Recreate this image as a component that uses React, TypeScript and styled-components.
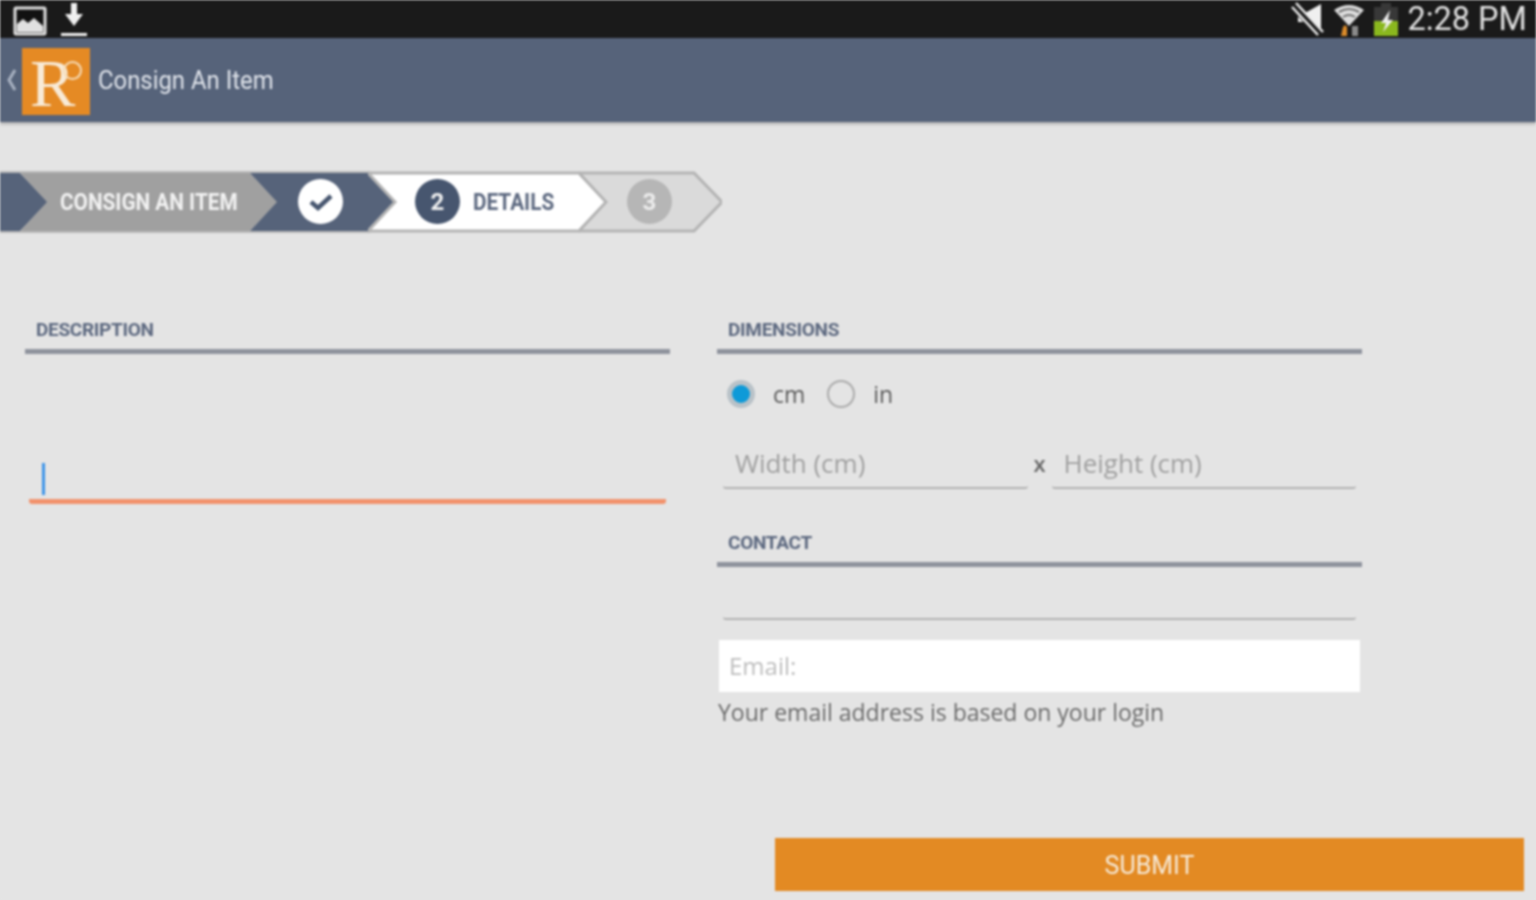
import React from 'react'
import styled, { createGlobalStyle } from 'styled-components'

const GlobalStyle = createGlobalStyle`
  html, body {
    margin: 0;
    padding: 0;
    background: #e4e4e4;
    overflow: hidden;
  }
`

export default function App() {
  return (
    <Screen>
      <GlobalStyle />
      <StatusBar>
        <StatusGroup>
          <PictureIcon />
          <DownloadIcon />
        </StatusGroup>
        <StatusGroup>
          <MuteIcon />
          <WifiIcon />
          <BatteryIcon />
          <Clock>2:28 PM</Clock>
        </StatusGroup>
      </StatusBar>

      <AppBar>
        <BackIcon />
        <Logo>
          R<LogoRing />
        </Logo>
        <AppTitle>Consign An Item</AppTitle>
      </AppBar>

      <Stepper>
        <StepStub>
          <StepShape width={48} fill="#56637a" flat />
        </StepStub>
        <Step $width={258}>
          <StepShape width={258} fill="#a0a0a0" />
          <StepLabel $color="#f2f2f2" $left={40}>CONSIGN AN ITEM</StepLabel>
        </Step>
        <Step $width={146}>
          <StepShape width={146} fill="#56637a" />
          <StepCircle $bg="#ffffff" $left={48}>
            <CheckIcon />
          </StepCircle>
        </Step>
        <Step $width={239}>
          <StepShape width={239} fill="#ffffff" stroke="#b4b4b4" />
          <StepCircle $bg="#47566f" $left={47}>2</StepCircle>
          <StepLabel $color="#5d6980" $left={105}>DETAILS</StepLabel>
        </Step>
        <Step $width={143}>
          <StepShape width={143} fill="#dadada" stroke="#b4b4b4" />
          <StepCircle $bg="#b6b6b6" $left={48} $color="#ececec">3</StepCircle>
        </Step>
      </Stepper>

      <Columns>
        <Column>
          <SectionHeader>DESCRIPTION</SectionHeader>
          <DescriptionField>
            <Caret />
          </DescriptionField>
        </Column>

        <Column>
          <SectionHeader>DIMENSIONS</SectionHeader>
          <RadioRow>
            <Radio $checked />
            <RadioLabel>cm</RadioLabel>
            <Radio />
            <RadioLabel>in</RadioLabel>
          </RadioRow>
          <SizeRow>
            <TextField>Width (cm)</TextField>
            <Times>x</Times>
            <TextField>Height (cm)</TextField>
          </SizeRow>

          <ContactHeader>CONTACT</ContactHeader>
          <EmptyField />
          <EmailBox>Email:</EmailBox>
          <Hint>Your email address is based on your login</Hint>
        </Column>
      </Columns>

      <SubmitRow>
        <SubmitButton>SUBMIT</SubmitButton>
      </SubmitRow>
    </Screen>
  )
}

function StepShape({ width, fill, stroke, flat }: { width: number; fill: string; stroke?: string; flat?: boolean }) {
  const shoulder = width - 28
  const points = flat
    ? `0,3 ${shoulder},3 ${width},32 ${shoulder},61 0,61`
    : `0,3 ${shoulder},3 ${width},32 ${shoulder},61 0,61 27,32`
  return (
    <ShapeSvg width={width} height={64} viewBox={`0 0 ${width} 64`}>
      <polygon points={points} fill={fill} stroke={stroke || 'none'} strokeWidth={3} />
      {!stroke && (
        <path d={`M0 2 H${shoulder + 2} M0 62 H${shoulder + 2}`} stroke="#b9b9b9" strokeWidth={2} />
      )}
    </ShapeSvg>
  )
}

function PictureIcon() {
  return (
    <svg width="34" height="34" viewBox="0 0 34 34" style={{ marginLeft: 13 }}>
      <rect x="2" y="6" width="30" height="26" rx="1" fill="#111" stroke="#e0e0e0" strokeWidth="3" />
      <path d="M4 30 V22 L10 17 L15 21 L21 16 L30 24 V30 Z" fill="#e0e0e0" />
    </svg>
  )
}

function DownloadIcon() {
  return (
    <svg width="26" height="36" viewBox="0 0 26 36" style={{ marginLeft: 14 }}>
      <path d="M10 2 H16 V13 H22 L13 25 L4 13 H10 Z" fill="#f0f0f0" />
      <rect x="0" y="32" width="26" height="3" fill="#f0f0f0" />
    </svg>
  )
}

function MuteIcon() {
  return (
    <svg width="34" height="34" viewBox="0 0 34 34">
      <path d="M7 11 L14 11 L30 2 V28 L14 20 L7 20 Z" fill="#f0f0f0" />
      <path d="M2 3 L30 33" stroke="#1a1a1a" strokeWidth="8" />
      <path d="M1 5 L27 33 M5 1 L32 30" stroke="#ececec" strokeWidth="2.5" />
    </svg>
  )
}

function WifiIcon() {
  return (
    <svg width="30" height="34" viewBox="0 0 30 34" style={{ marginLeft: 9 }}>
      <path d="M0 8 Q15 -2 30 8 L15 24 Z" fill="#dcdcdc" />
      <path d="M5 10 Q15 4 25 10 M9 15 Q15 11 21 15" stroke="#555" strokeWidth="1.5" fill="none" />
      <path d="M9 25 L11 23 L13 25 V34 H7 Z" fill="#d98a2a" />
      <rect x="18" y="24" width="6" height="10" fill="#8a8a8a" />
    </svg>
  )
}

function BatteryIcon() {
  return (
    <svg width="26" height="36" viewBox="0 0 26 36" style={{ marginLeft: 9 }}>
      <rect x="8" y="2" width="10" height="4" fill="#383838" />
      <rect x="1" y="6" width="24" height="14" fill="#383838" />
      <rect x="1" y="20" width="24" height="15" fill="#8ab81e" />
      <path d="M17 9 L8 22 H13 L10 31 L20 19 H15 Z" fill="#eeeeee" />
    </svg>
  )
}

function BackIcon() {
  return (
    <BackSvg width="12" height="24" viewBox="0 0 12 24">
      <path d="M9 2 L3 12 L9 22" stroke="#a9b2c2" strokeWidth="3" fill="none" />
    </BackSvg>
  )
}

function CheckIcon() {
  return (
    <svg width="26" height="20" viewBox="0 0 26 20">
      <path d="M3 10 L10 16 L23 4" stroke="#47566f" strokeWidth="4.5" fill="none" />
    </svg>
  )
}

const Screen = styled.div`
  width: 1536px;
  height: 900px;
  background: #e4e4e4;
  font-family: 'Open Sans', sans-serif;
  overflow: hidden;
  filter: blur(0.9px);
`

const StatusBar = styled.div`
  height: 38px;
  background: #1a1a1a;
  display: flex;
  align-items: center;
  justify-content: space-between;
`

const StatusGroup = styled.div`
  display: flex;
  align-items: center;
`

const Clock = styled.span`
  margin: 0 9px 0 8px;
  font-family: 'Roboto', sans-serif;
  font-size: 32.5px;
  line-height: 38px;
  color: #e0e0e0;
  white-space: nowrap;
`

const AppBar = styled.div`
  height: 84px;
  background: #56637a;
  display: flex;
  align-items: center;
  box-shadow: 0 2px 3px rgba(0, 0, 0, 0.25);
`

const BackSvg = styled.svg`
  margin-left: 6px;
  flex: none;
`

const Logo = styled.div`
  position: relative;
  width: 68px;
  height: 67px;
  margin: 2px 0 0 4px;
  background: #e58a24;
  color: #f8ead6;
  font-family: 'Liberation Serif', serif;
  font-size: 68px;
  line-height: 70px;
  padding-left: 8px;
  box-sizing: border-box;
`

const LogoRing = styled.span`
  position: absolute;
  top: 13px;
  right: 8px;
  width: 15px;
  height: 15px;
  border: 2px solid #f6dcb8;
  border-radius: 50%;
`

const AppTitle = styled.span`
  margin-left: 8px;
  font-family: 'Roboto', sans-serif;
  font-size: 25px;
  color: #dfe3ea;
  white-space: nowrap;
  display: inline-block;
  transform: scaleX(0.955);
  transform-origin: left center;
`

const Stepper = styled.div`
  display: flex;
  height: 64px;
  margin-top: 48px;
`

const StepStub = styled.div`
  position: relative;
  width: 48px;
  height: 64px;
  flex: none;
`

const Step = styled.div<{ $width: number }>`
  position: relative;
  flex: none;
  width: ${(p) => p.$width}px;
  height: 64px;
  margin-left: -28px;
`

const ShapeSvg = styled.svg`
  position: absolute;
  top: 0;
  left: 0;
`

const StepLabel = styled.span<{ $color: string; $left: number }>`
  position: absolute;
  top: 17px;
  left: ${(p) => p.$left}px;
  font-family: 'Roboto', sans-serif;
  font-size: 24px;
  line-height: 30px;
  font-weight: 700;
  color: ${(p) => p.$color};
  white-space: nowrap;
  transform: scaleX(0.865);
  transform-origin: left center;
`

const StepCircle = styled.div<{ $bg: string; $left: number; $color?: string }>`
  position: absolute;
  top: 9px;
  left: ${(p) => p.$left}px;
  width: 45px;
  height: 45px;
  border-radius: 50%;
  background: ${(p) => p.$bg};
  color: ${(p) => p.$color || '#f0f0f0'};
  display: flex;
  align-items: center;
  justify-content: center;
  font-family: 'Roboto', sans-serif;
  font-size: 24px;
  font-weight: 700;
`

const Columns = styled.div`
  display: grid;
  grid-template-columns: 645px 645px;
  column-gap: 47px;
  margin: 82px 0 0 25px;
  height: 522px;
`

const Column = styled.div`
  display: flex;
  flex-direction: column;
  align-items: stretch;
`

const SectionHeader = styled.div`
  height: 33px;
  padding-left: 11px;
  border-bottom: 5px solid #8f939d;
  font-family: 'Roboto', sans-serif;
  font-size: 19px;
  line-height: 27px;
  font-weight: 700;
  color: #5d6980;
  letter-spacing: -0.3px;
`

const ContactHeader = styled(SectionHeader)`
  margin-top: 40px;
`

const DescriptionField = styled.div`
  position: relative;
  height: 43px;
  margin: 102px 4px 0 4px;
  border-bottom: 5px solid #f2926c;
  border-radius: 0 0 3px 3px;
`

const Caret = styled.span`
  position: absolute;
  left: 13px;
  top: 7px;
  width: 3px;
  height: 32px;
  background: #3d94e8;
`

const RadioRow = styled.div`
  display: flex;
  align-items: center;
  height: 40px;
  margin: 20px 0 0 10px;
`

const Radio = styled.span<{ $checked?: boolean }>`
  width: 28px;
  height: 28px;
  flex: none;
  box-sizing: border-box;
  border-radius: 50%;
  border: ${(p) => (p.$checked ? '5px solid #b9c2c8' : '2.5px solid #ababab')};
  background: ${(p) => (p.$checked ? '#0e9ad8' : 'transparent')};
`

const RadioLabel = styled.span`
  margin: 0 22px 0 18px;
  font-family: 'Open Sans', sans-serif;
  font-size: 23px;
  color: #5a5a5a;
`

const SizeRow = styled.div`
  display: flex;
  align-items: flex-end;
  margin: 30px 6px 0 6px;
`

const TextField = styled.div`
  flex: 1;
  height: 43px;
  padding-left: 12px;
  border-bottom: 2px solid #b2b2b2;
  border-radius: 0 0 3px 3px;
  font-family: 'Open Sans', sans-serif;
  font-size: 26px;
  line-height: 38px;
  color: #a0a0a0;
`

const Times = styled.span`
  width: 24px;
  text-align: center;
  margin-bottom: 11px;
  font-size: 22px;
  line-height: 30px;
  font-weight: 600;
  color: #666666;
`

const EmptyField = styled.div`
  height: 51px;
  margin: 0 6px;
  border-bottom: 2px solid #b2b2b2;
  border-radius: 0 0 3px 3px;
`

const EmailBox = styled.div`
  height: 52px;
  margin: 20px 2px 0 2px;
  padding-left: 10px;
  background: #ffffff;
  font-family: 'Open Sans', sans-serif;
  font-size: 24px;
  line-height: 52px;
  color: #bdbdbd;
`

const Hint = styled.div`
  margin: 3px 0 0 1px;
  font-family: 'Open Sans', sans-serif;
  font-size: 23px;
  line-height: 34px;
  color: #6a6a6a;
  white-space: nowrap;
`

const SubmitRow = styled.div`
  display: flex;
  justify-content: flex-end;
  padding-right: 12px;
`

const SubmitButton = styled.div`
  width: 749px;
  height: 53px;
  background: #e38a23;
  color: #f6ead8;
  font-family: 'Roboto', sans-serif;
  font-size: 25px;
  line-height: 55px;
  text-align: center;
`
